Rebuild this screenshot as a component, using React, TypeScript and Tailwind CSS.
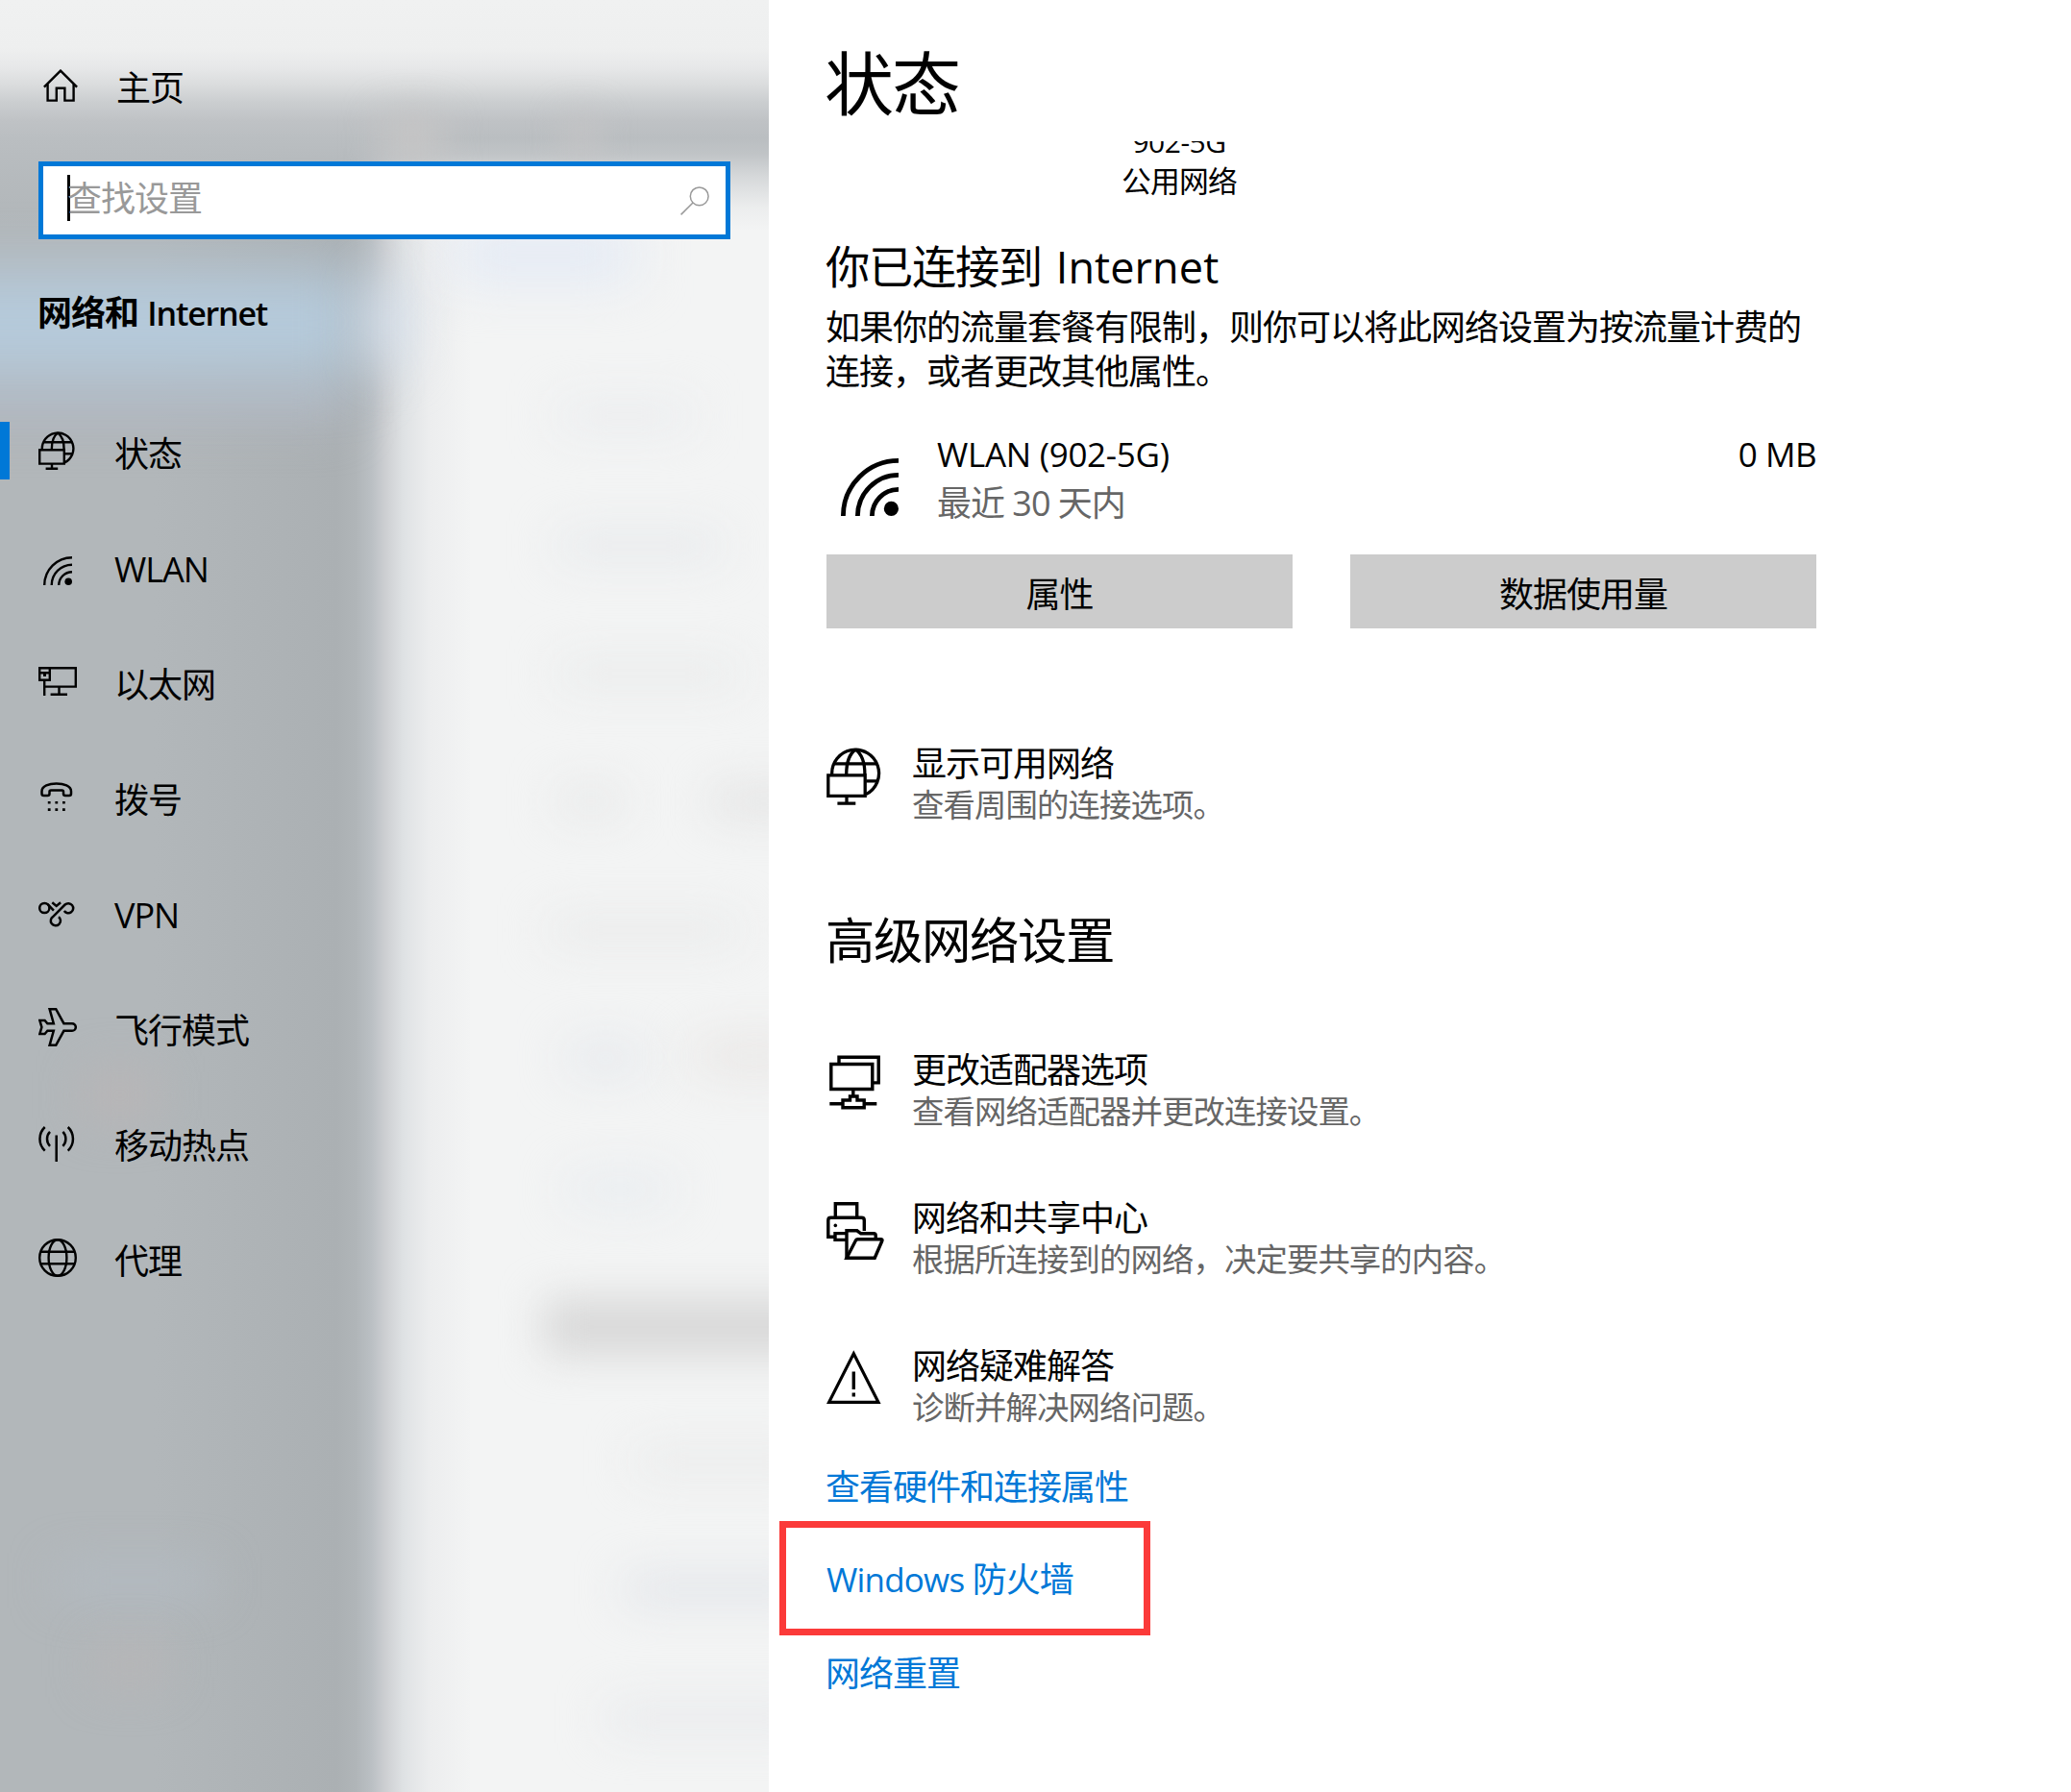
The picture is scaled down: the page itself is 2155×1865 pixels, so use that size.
import type { ReactNode } from "react";

function Svg({ size, box, stroke, children }: { size: string; box: string; stroke: number; children: ReactNode }) {
  return (
    <svg className={size} viewBox={box} fill="none" stroke="currentColor" strokeWidth={stroke}>
      {children}
    </svg>
  );
}

function HomeIcon() {
  return (
    <Svg size="h-[34px] w-[37px]" box="0 0 37 34" stroke={2.4}>
      <path d="M.9 18.6 18 1.6l17.1 17" />
      <path d="M4.6 15.5v17.1h9.2V19.8h8.6v12.8h9.2V15.5" />
    </Svg>
  );
}

function SearchIcon() {
  return (
    <Svg size="h-[30px] w-[30px]" box="0 0 30 30" stroke={1.5}>
      <circle cx="19.7" cy="10.3" r="9.4" />
      <path d="M13 17 .6 29.4" />
    </Svg>
  );
}

function GlobeMonitorIcon({ size, stroke }: { size: string; stroke: number }) {
  return (
    <Svg size={size} box="0 0 40 40" stroke={stroke}>
      <path d="M3.8 18.6A16.3 16.3 0 1 1 27.4 32.4" />
      <path d="M13.8 18.6C13.8 10 16.5 3.8 20.2 1.4M20.2 1.4c4.2 3 6.4 9.2 6.4 17.2M5 11.3h30.4M27.5 23.3h8.3" />
      <path d="M1.2 19.2h25.6v14.4H1.2zM14 33.6v5M7.6 38.8h12.6" />
    </Svg>
  );
}

function WifiIcon({ size }: { size: string }) {
  return (
    <Svg size={size} box="0 0 30 30" stroke={2.4}>
      <path d="M1.2 30A28.8 28.8 0 0 1 30 1.2M8.7 30A21.3 21.3 0 0 1 30 8.7M16.2 30A13.8 13.8 0 0 1 30 16.2" />
      <circle cx="26.2" cy="26.2" r="3.8" fill="currentColor" stroke="none" />
    </Svg>
  );
}

function EthernetIcon() {
  return (
    <Svg size="h-10 w-10" box="0 0 40 40" stroke={2.4}>
      <path d="M12 6.2h26.8v19.4H6.2M6.2 19v16M21.5 25.6v8M12.6 33.8H30" />
      <path d="M1.2 6.2h10.6v12.6H1.2zM1 11.3h11" />
      <path d="M6.5 11v4" strokeWidth="3" />
    </Svg>
  );
}

function DialIcon() {
  return (
    <Svg size="h-10 w-10" box="0 0 40 40" stroke={2.5}>
      <path d="M3.5 14.5C3.5 9 11 6.5 18.7 6.5S34 9 34 14.5V17q0 2-2 2h-4q-2 0-2-2v-2q0-1.5-1.5-1.5H13q-1.5 0-1.5 1.5v2q0 2-2 2h-4q-2 0-2-2z" />
      <path d="M9.8 26.2h2.8M17.4 26.2h2.8M25 26.2h2.8M9.8 33.6h2.8M17.4 33.6h2.8M25 33.6h2.8" strokeWidth="2.6" />
    </Svg>
  );
}

function VpnIcon() {
  return (
    <Svg size="h-10 w-10" box="0 0 40 40" stroke={2.5}>
      <circle cx="6.3" cy="16" r="5.1" />
      <path d="M9.6 12l6.3 6.6M14.3 10.3l4.4 3.6 4.4-3.6" />
      <path d="M21 25.2a5.1 5.1 0 1 1-5.6-.4L27.6 12.5a5.1 5.1 0 1 1-.8 6.5" />
    </Svg>
  );
}

function PlaneIcon() {
  return (
    <Svg size="h-10 w-10" box="0 0 40 40" stroke={2.5}>
      <path d="M11.6 1.2h6.6L26.4 16.2H35a3.8 3.8 0 0 1 0 7.6h-8.6L18.2 38.8h-6.6l4.2-15H9.4L6.6 27H1.4l2-7-2-7h5.2l2.8 3.2h6.4z" />
    </Svg>
  );
}

function HotspotIcon() {
  return (
    <Svg size="h-10 w-10" box="0 0 40 40" stroke={2.5}>
      <path d="M18.7 12.5V40M6.7 4c-7 6.6-7 18 0 24.6M30.7 4c7 6.6 7 18 0 24.6M12 8.8c-4 4-4 11 0 15M25.4 8.8c4 4 4 11 0 15" />
    </Svg>
  );
}

function GlobeIcon() {
  return (
    <Svg size="h-10 w-10" box="0 0 40 40" stroke={2.4}>
      <circle cx="20" cy="20" r="18.8" />
      <ellipse cx="20" cy="20" rx="9.4" ry="18.8" />
      <path d="M2.5 13.8h35M2.5 26.2h35" />
    </Svg>
  );
}

function AdapterIcon() {
  return (
    <Svg size="h-[60px] w-[60px]" box="0 0 60 60" stroke={3.4}>
      <path d="M4.8 10.500h43v26h-43zM13 9V3.300h41.200v26.600H48M27.800 36.500v7M3.300 51.800H17M39 51.800h13.300" />
      <path d="M17 55.800V48h7.500v-4h7.500v4h7.200v7.800z" />
    </Svg>
  );
}

function SharingIcon() {
  return (
    <Svg size="h-[60px] w-[60px]" box="0 0 60 60" stroke={3.4}>
      <path d="M9.3 16V1.700h22.400V16" />
      <path d="M8 36.300H1.800V19q0-2.700 2.700-2.700h32q2.800 0 2.800 2.700v11" />
      <path d="M20 32.600H9v6.800h11" />
      <circle cx="9.3" cy="24.400" r="1.800" fill="currentColor" stroke="none" />
      <path d="M21 58V29.800h10.800l4 3h13.400q2 0 2 2V39" />
      <path d="M21 58.200 30.400 40q.8-1.200 2-1.200h24q2.300 0 1.300 2L50.200 58.200z" />
    </Svg>
  );
}

function WarningIcon() {
  return (
    <Svg size="h-[60px] w-[60px]" box="0 0 60 60" stroke={3.2}>
      <path d="M28.300 3.800 54 54.400H2.600z" />
      <path d="M28.300 22.500V41M28.300 44.500v4" strokeWidth="3.400" />
    </Svg>
  );
}

const navItems = [
  { label: "状态", icon: <GlobeMonitorIcon size="h-10 w-10" stroke={2.4} />, active: true },
  { label: "WLAN", icon: <span className="flex h-10 w-10 items-end pl-[5px]"><WifiIcon size="h-[30px] w-[30px]" /></span> },
  { label: "以太网", icon: <EthernetIcon /> },
  { label: "拨号", icon: <DialIcon /> },
  { label: "VPN", icon: <VpnIcon /> },
  { label: "飞行模式", icon: <PlaneIcon /> },
  { label: "移动热点", icon: <HotspotIcon /> },
  { label: "代理", icon: <GlobeIcon /> },
];

const advancedItems = [
  { title: "更改适配器选项", detail: "查看网络适配器并更改连接设置。", icon: <AdapterIcon /> },
  { title: "网络和共享中心", detail: "根据所连接到的网络，决定要共享的内容。", icon: <SharingIcon /> },
  { title: "网络疑难解答", detail: "诊断并解决网络问题。", icon: <WarningIcon /> },
];

// Translucent sidebar: the window behind shows through as soft patches
function AcrylicBackdrop() {
  return (
    <div className="absolute inset-0 overflow-hidden bg-[linear-gradient(90deg,#b2b7ba_0px,#b2b7ba_160px,#aeb3b6_270px,#abb0b3_350px,#b0b5b8_370px,#babfc3_386px,#ced0d3_402px,#dfe2e4_420px,#ecedee_446px,#f3f4f4_490px,#f3f4f4_800px)]">
      <div className="absolute -left-20 top-[390px] h-[50px] w-[440px] bg-[#b1b7c0] blur-[24px]" />
      <div className="absolute -left-20 top-[282px] h-[110px] w-[456px] bg-[#b5cadb] blur-[30px]" />
      <div className="absolute left-[385px] top-[290px] h-[90px] w-[36px] bg-[#dbe5f1] blur-[26px]" />
      <div className="absolute left-[470px] top-[240px] h-[50px] w-[190px] bg-[#e2e9f5] blur-[28px]" />
      <div className="absolute left-[90px] top-[1115px] h-[50px] w-[70px] bg-[#b9b5b6] blur-[24px]" />
      <div className="absolute left-[60px] top-[1630px] h-[30px] w-[160px] bg-[#b3bbc3] blur-[24px]" />
      <div className="absolute left-[100px] top-[1715px] h-[36px] w-[70px] bg-[#b8b5b6] blur-[24px]" />
      <div className="absolute left-[580px] top-[420px] h-[26px] w-[140px] bg-[#e9ebee] blur-[24px]" />
      <div className="absolute left-[580px] top-[555px] h-[26px] w-[170px] bg-[#e5e8eb] blur-[24px]" />
      <div className="absolute left-[580px] top-[688px] h-[26px] w-[190px] bg-[#e8eaea] blur-[24px]" />
      <div className="absolute left-[580px] top-[820px] h-[28px] w-[70px] bg-[#e6e7e7] blur-[24px]" />
      <div className="absolute left-[740px] top-[820px] h-[28px] w-[120px] bg-[#e0e0e0] blur-[24px]" />
      <div className="absolute left-[570px] top-[955px] h-[26px] w-[200px] bg-[#e8e9e9] blur-[24px]" />
      <div className="absolute left-[590px] top-[1088px] h-[26px] w-[80px] bg-[#e0e4ea] blur-[26px]" />
      <div className="absolute left-[720px] top-[1084px] h-[30px] w-[130px] bg-[#e6e3e1] blur-[26px]" />
      <div className="absolute left-[590px] top-[1225px] h-[26px] w-[110px] bg-[#e4e9ee] blur-[26px]" />
      <div className="absolute left-[566px] top-[1352px] h-[58px] w-[330px] bg-[#d7d7d7] blur-[22px]" />
      <div className="absolute left-[660px] top-[1508px] h-[26px] w-[190px] bg-[#e9eaea] blur-[24px]" />
      <div className="absolute left-[650px] top-[1640px] h-[28px] w-[200px] bg-[#e0e3e8] blur-[24px]" />
      <div className="absolute left-[630px] top-[1775px] h-[26px] w-[220px] bg-[#e6e8eb] blur-[24px]" />
      <div className="absolute inset-x-0 top-0 h-[240px] bg-[linear-gradient(180deg,#f0f1f1_0px,#eeefef_50px,#e7e8e9_70px,#d9dbdc_90px,#cbced0_106px,#bfc2c5_126px,#babec1_144px,#b9bdc0e0_160px,#b9bdc080_184px,#b9bdc020_216px,#b9bdc000_240px)]" />
      <div className="absolute left-[400px] top-[120px] h-[50px] w-[60px] bg-[#c7c6c6] blur-[20px]" />
      <div className="absolute left-[590px] top-[120px] h-[46px] w-[30px] bg-[#c6c5c6] blur-[18px]" />
    </div>
  );
}

function Sidebar() {
  return (
    <aside className="relative w-[800px] shrink-0">
      <AcrylicBackdrop />
      <div className="relative">
        <div className="flex h-[168px] items-start pl-[45px] pt-[72px]">
          <HomeIcon />
          <span className="ml-[39px] leading-[40px]">主页</span>
        </div>
        <div className="mx-10 flex h-[81px] items-center border-[5px] border-[#0078d7] bg-white pl-[25px] pr-[17px]">
          <span className="-mt-[5px] h-12 w-[3px] bg-black" />
          <span className="-ml-[3px] -mt-[3px] flex-1 leading-[40px] text-[#999]">查找设置</span>
          <span className="text-[#999]">
            <SearchIcon />
          </span>
        </div>
        <h2 className="mt-[57px] pl-[39px] font-bold leading-[40px]">
          网络和 <span className="ml-px text-[34px] font-semibold tracking-[-1.2px]">Internet</span>
        </h2>
        <nav className="mt-[63px]">
          {navItems.map((item) => (
            <div key={item.label} className="flex h-[120px] items-center">
              <span className={item.active ? "h-[60px] w-[10px] bg-[#0078d7]" : "h-[60px] w-[10px]"} />
              <span className="ml-[30px]">{item.icon}</span>
              <span className="ml-[39px] mt-[8px] leading-[40px]">{item.label}</span>
            </div>
          ))}
        </nav>
      </div>
    </aside>
  );
}

function SettingRow({ icon, title, detail }: { icon: ReactNode; title: string; detail: string }) {
  return (
    <div className="flex h-[154px] items-start">
      <span className="mt-[7px] w-[89px]">{icon}</span>
      <div className="pt-px">
        <p className="leading-[46px]">{title}</p>
        <p className="-mt-[3px] text-[33.4px] leading-[44px] tracking-[-0.9px] text-[#666]">{detail}</p>
      </div>
    </div>
  );
}

function StatusPage() {
  return (
    <main className="flex-1 bg-white pl-[60px] pt-[46px]">
      <h1 className="-ml-[2px] text-[72px] leading-[80px] tracking-[-2px]">状态</h1>
      {/* scrolled list, its first line is half hidden under the title */}
      <div className="-ml-[60px] mt-[21px] overflow-hidden pl-[60px]">
        <div className="-mt-5 w-[734px] text-center leading-[41px]">
          <p className="text-[30px] tracking-[-0.5px]">902-5G</p>
          <p className="text-[30.8px] tracking-[-0.8px]">公用网络</p>
        </div>
        <h2 className="-ml-px mt-[39px] text-[46.2px] leading-[60px] tracking-[-1.2px]">
          你已连接到 <span className="ml-[4px] text-[45px] tracking-[0.1px]">Internet</span>
        </h2>
        <p className="-ml-px mt-[10px] leading-[46px]">
          如果你的流量套餐有限制，则你可以将此网络设置为按流量计费的
          <br />
          连接，或者更改其他属性。
        </p>
        <div className="mt-[40px] flex w-[1030px] pl-[15px]">
          <span className="mt-[27px]">
            <WifiIcon size="h-[60px] w-[60px]" />
          </span>
          <div className="ml-[40px] flex-1">
            <p className="text-[35px] leading-[46px] tracking-[-0.3px]">WLAN (902-5G)</p>
            <p className="mt-[5px] leading-[46px] text-[#666]">最近 30 天内</p>
          </div>
          <p className="text-[35px] leading-[46px] tracking-[-0.5px]">0 MB</p>
        </div>
        <div className="mt-[30px] flex gap-[60px]">
          <button className="h-[77px] w-[485px] bg-[#ccc] pt-[7px] tracking-[-1px]">属性</button>
          <button className="h-[77px] w-[485px] bg-[#ccc] pt-[7px] tracking-[-1px]">数据使用量</button>
        </div>
        <div className="mt-[117px]">
          <SettingRow
            icon={<GlobeMonitorIcon size="h-[60px] w-[60px]" stroke={2.2} />}
            title="显示可用网络"
            detail="查看周围的连接选项。"
          />
        </div>
        <h2 className="-ml-px mt-[23px] text-[51.4px] leading-[60px] tracking-[-1.4px]">高级网络设置</h2>
        <div className="mt-[82px]">
          {advancedItems.map((item) => (
            <SettingRow key={item.title} {...item} />
          ))}
        </div>
        <div className="-mt-[27px] flex flex-col items-start text-[#0078d7]">
          <a className="-ml-px leading-[46px]">查看硬件和连接属性</a>
          <a className="relative mt-[50px] leading-[46px]">
            <span className="text-[35px] tracking-[-0.8px]">Windows</span> 防火墙
            <span className="absolute -left-[49px] -top-[38px] h-[119px] w-[386px] border-[7px] border-[#fb3a39]" />
          </a>
          <a className="-ml-px mt-[52px] leading-[46px]">网络重置</a>
        </div>
      </div>
    </main>
  );
}

export default function App() {
  return (
    <div className="flex h-[1865px] w-[2155px] overflow-hidden bg-white font-['Open_Sans','Noto_Sans_CJK_SC',sans-serif] text-[36px] tracking-[-1px] text-black">
      <Sidebar />
      <StatusPage />
    </div>
  );
}
